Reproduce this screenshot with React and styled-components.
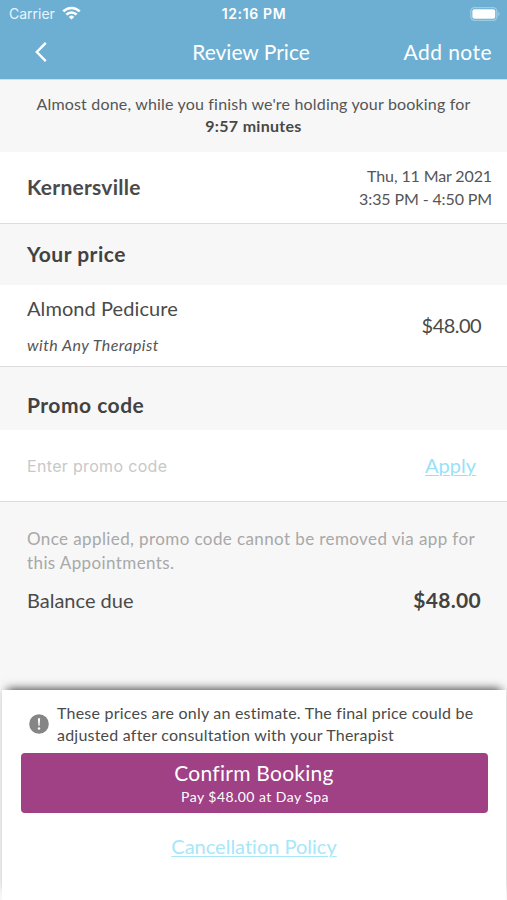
import React, { useState } from 'react';
import styled, { createGlobalStyle } from 'styled-components';

const GlobalStyle = createGlobalStyle`
  * {
    box-sizing: border-box;
  }
  body {
    margin: 0;
    background: #f7f7f7;
    font-family: Lato, 'Open Sans', sans-serif;
    font-variant-ligatures: none;
    color: #4a4a4a;
  }
`

const WifiIcon = () => (
  <svg width="19" height="14" viewBox="0 0 19 14" fill="none" stroke="#fff" strokeWidth="2.7">
    <path d="M1.3 5.4 A11.6 11.6 0 0 1 17.7 5.4" />
    <path d="M4.4 8.6 A7.2 7.2 0 0 1 14.6 8.6" />
    <path d="M9.5 13.6 L6.8 10.9 A3.8 3.8 0 0 1 12.2 10.9 Z" fill="#fff" stroke="none" />
  </svg>
)

const BatteryIcon = () => (
  <svg width="31" height="14" viewBox="0 0 31 14">
    <rect x="0.8" y="0.6" width="26" height="12.8" rx="3.8" fill="none" stroke="#9ccbe4" strokeWidth="1.4" />
    <rect x="2.4" y="2.2" width="22.8" height="9.6" rx="2" fill="#fff" />
    <path d="M28.2 4.8 A2.5 2.5 0 0 1 28.2 9.2 Z" fill="#9ccbe4" />
  </svg>
)

const BackIcon = () => (
  <svg width="12" height="20" viewBox="0 0 12 20" fill="none" stroke="#fff" strokeWidth="2.4">
    <path d="M10.8 0.8 L1.8 10 L10.8 19.2" />
  </svg>
)

const AlertIcon = () => (
  <svg width="20" height="20" viewBox="0 0 20 20">
    <circle cx="10" cy="10" r="9.8" fill="#858585" />
    <path d="M8.9 4.2 H11.1 L10.6 11.8 H9.4 Z" fill="#fff" />
    <circle cx="10" cy="14.5" r="1.2" fill="#fff" />
  </svg>
)

const App = () => {
  const [promo, setPromo] = useState('')

  return (
    <Screen>
      <GlobalStyle />
      <Header>
        <StatusBar>
          <Carrier>Carrier <WifiIcon /></Carrier>
          <Clock>12:16 PM</Clock>
          <Battery><BatteryIcon /></Battery>
        </StatusBar>
        <NavBar>
          <BackButton aria-label="Back"><BackIcon /></BackButton>
          <NavTitle>Review Price</NavTitle>
          <NoteButton>Add note</NoteButton>
        </NavBar>
      </Header>

      <HoldNotice>
        Almost done, while you finish we're holding your booking for
        <Timer>9:57 minutes</Timer>
      </HoldNotice>

      <Row $height={72} $right={15}>
        <Location>Kernersville</Location>
        <Schedule>
          <span>Thu, 11 Mar 2021</span>
          <span>3:35 PM - 4:50 PM</span>
        </Schedule>
      </Row>

      <SectionTitle $height={61}>Your price</SectionTitle>
      <Row $height={82} $right={26}>
        <Service>
          <Label $spacing={0.08}>Almond Pedicure</Label>
          <Therapist>with Any Therapist</Therapist>
        </Service>
        <Price>$48.00</Price>
      </Row>

      <SectionTitle $height={63} $top={13}>Promo code</SectionTitle>
      <Row $height={72} $right={31}>
        <PromoInput placeholder="Enter promo code" value={promo} onChange={(e) => setPromo(e.target.value)} />
        <LinkButton>Apply</LinkButton>
      </Row>

      <Summary>
        <PromoHint>
          <div>Once applied, promo code cannot be removed via app for</div>
          <div>this Appointments.</div>
        </PromoHint>
        <Balance>
          <Label>Balance due</Label>
          <Total>$48.00</Total>
        </Balance>
      </Summary>

      <Sheet>
        <Estimate>
          <AlertIcon />
          <div>
            <div>These prices are only an estimate. The final price could be</div>
            <div>adjusted after consultation with your Therapist</div>
          </div>
        </Estimate>
        <ConfirmButton>
          <ConfirmTitle>Confirm Booking</ConfirmTitle>
          <ConfirmNote>Pay $48.00 at Day Spa</ConfirmNote>
        </ConfirmButton>
        <PolicyLink>Cancellation Policy</PolicyLink>
      </Sheet>
    </Screen>
  )
}

const Screen = styled.div`
  display: flex;
  flex-direction: column;
  height: 900px;
  overflow: hidden;
  background: #f7f7f7;
`

const Button = styled.button`
  border: 0;
  padding: 0;
  background: none;
  font-family: inherit;
  font-variant-ligatures: none;
  cursor: pointer;
`

const Header = styled.header`
  height: 80px;
  background: #6dafd3;
  border-bottom: 1px solid #c3e2f3;
  color: #fff;
`

const StatusBar = styled.div`
  display: grid;
  grid-template-columns: 1fr auto 1fr;
  align-items: center;
  height: 27px;
  padding: 0 6px 0 9px;
  font-family: Inter, 'Liberation Sans', sans-serif;
  font-size: 14px;
`

const Carrier = styled.div`
  display: flex;
  align-items: center;
  gap: 7px;
  color: #e8f5fc;

  svg {
    margin-top: -2px;
  }
`

const Clock = styled.div`
  padding-right: 2px;
  font-weight: 600;
  letter-spacing: 0.65px;
`

const Battery = styled.div`
  display: flex;
  justify-content: flex-end;
`

const NavBar = styled.div`
  display: grid;
  grid-template-columns: 1fr auto 1fr;
  align-items: center;
  height: 49px;
  padding: 0 15px 0 35px;
  font-size: 21px;
`

const BackButton = styled(Button)`
  display: flex;
  justify-self: start;
`

const NavTitle = styled.div`
  padding-right: 25px;
`

const NoteButton = styled(Button)`
  justify-self: end;
  color: #fff;
  font-size: 21px;
  letter-spacing: 0.45px;
`

const HoldNotice = styled.div`
  height: 72px;
  padding-top: 13px;
  font-size: 16px;
  line-height: 22px;
  letter-spacing: 0.18px;
  text-align: center;
  color: #555;
`

const Timer = styled.div`
  font-weight: 700;
  letter-spacing: 0.3px;
  color: #484848;
`

const Row = styled.div`
  display: flex;
  align-items: center;
  justify-content: space-between;
  height: ${({ $height }) => $height}px;
  padding: 0 ${({ $right }) => $right}px 2px 27px;
  background: #fff;
  border-bottom: 1px solid #dcdcdc;
`

const Location = styled.div`
  font-size: 21px;
  font-weight: 700;
  letter-spacing: 0.25px;
`

const Schedule = styled.div`
  display: flex;
  flex-direction: column;
  align-items: flex-end;
  font-size: 16px;
  line-height: 23px;
  letter-spacing: -0.12px;
  color: #555;
`

const SectionTitle = styled.div`
  display: flex;
  align-items: center;
  height: ${({ $height }) => $height}px;
  padding: ${({ $top }) => $top || 0}px 27px 2px;
  font-size: 21px;
  font-weight: 700;
  letter-spacing: 0.5px;
  color: #424242;
`

const Service = styled.div`
  display: flex;
  flex-direction: column;
  gap: 15px;
  padding-top: 2px;
`

const Label = styled.div`
  font-size: 20px;
  line-height: 24px;
  letter-spacing: ${({ $spacing }) => $spacing || 0}px;
`

const Therapist = styled.div`
  font-size: 16px;
  line-height: 20px;
  font-style: italic;
  letter-spacing: 0.45px;
  color: #555;
`

const Price = styled.div`
  font-size: 20px;
  letter-spacing: -0.55px;
`

const PromoInput = styled.input`
  width: 300px;
  border: 0;
  padding: 3px 0 0;
  outline: none;
  background: none;
  font-family: Inter, 'Liberation Sans', sans-serif;
  font-size: 16px;
  letter-spacing: 0.33px;
  color: #4a4a4a;

  &::placeholder {
    color: #c8c8c8;
  }
`

const LinkButton = styled(Button)`
  font-size: 20px;
  line-height: 24px;
  color: #98e2f6;
  text-decoration: underline;
  text-decoration-thickness: 1px;
  text-underline-offset: 2px;
`

const PolicyLink = styled(LinkButton)`
  padding-right: 1px;
  color: #a6e7f8;
`

const Summary = styled.div`
  flex: 1;
  padding: 25px 26px 0 27px;
`

const PromoHint = styled.div`
  font-size: 17px;
  line-height: 23.5px;
  letter-spacing: 0.4px;
  color: #a8a8a8;
`

const Balance = styled.div`
  display: flex;
  justify-content: space-between;
  align-items: center;
  margin-top: 14px;
`

const Total = styled.div`
  font-size: 21px;
  line-height: 24px;
  font-weight: 700;
  letter-spacing: 0.3px;
  color: #424242;
`

const Sheet = styled.div`
  display: flex;
  flex-direction: column;
  align-items: center;
  height: 210px;
  margin: 0 1px 0 2px;
  padding: 12px 18px 0 19px;
  background: #fff;
  box-shadow: 0 -6px 9px -5px rgba(0, 0, 0, 0.75);
`

const Estimate = styled.div`
  display: flex;
  align-items: center;
  align-self: flex-start;
  gap: 8px;
  height: 43px;
  padding-left: 8px;
  font-size: 16px;
  line-height: 21.5px;
  letter-spacing: 0.22px;
  white-space: nowrap;
`

const ConfirmButton = styled(Button)`
  display: flex;
  flex-direction: column;
  align-items: center;
  width: 100%;
  height: 60px;
  margin: 8px 0 21px;
  padding: 8px 1px 0 0;
  border-radius: 4px;
  background: #a04185;
  color: #fff;
`

const ConfirmTitle = styled.span`
  font-size: 21px;
  line-height: 24px;
  letter-spacing: 0.27px;
`

const ConfirmNote = styled.span`
  margin-top: 2px;
  padding-left: 2px;
  font-size: 14px;
  line-height: 20px;
  letter-spacing: 0.45px;
`

export default App
